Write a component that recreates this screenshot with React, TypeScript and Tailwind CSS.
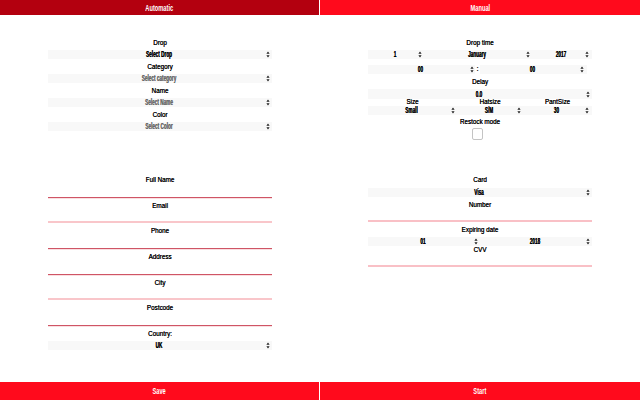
import React from 'react';

const valueFont = "font-['Liberation_Sans',sans-serif] font-bold";

function Arrows() {
  return (
    <svg width="4" height="7" viewBox="0 0 4 7" className="shrink-0">
      <path d="M2 0.5 L3.6 2.8 H0.4 Z M2 6.5 L3.6 4.2 H0.4 Z" fill="#222" />
    </svg>
  );
}

function Select({
  value,
  muted,
  className = 'h-[9px]',
  pad = 'pr-[2px]',
}: {
  value: string;
  muted?: boolean;
  className?: string;
  pad?: string;
}) {
  return (
    <div className={`relative flex items-center justify-end bg-[#f8f8f8] ${pad} ${className}`}>
      <span
        className={`absolute inset-x-0 scale-x-[0.52] pr-[4px] text-center text-[9px] leading-[9px] whitespace-nowrap [text-shadow:0.3px_0_0_currentColor] ${valueFont} ${
          muted ? 'text-[#6a6a6a]' : 'text-black'
        }`}
      >
        {value}
      </span>
      <Arrows />
    </div>
  );
}

function Label({ text, className = 'h-[15px] pt-[1px]' }: { text: string; className?: string }) {
  return (
    <div
      className={`flex items-center justify-center text-[6.3px] leading-none text-black [text-shadow:0.2px_0_0_currentColor] ${className}`}
    >
      {text}
    </div>
  );
}

function Field({ text, line }: { text: string; line: string }) {
  return (
    <div className={`h-[25.7px] pt-[3px] ${line}`}>
      <Label text={text} className="h-[10px]" />
    </div>
  );
}

function Bar({ text, className }: { text: string; className: string }) {
  return (
    <div className={`flex items-center justify-center ${className}`}>
      <span className={`scale-x-[0.6] text-[9.5px] leading-none text-white ${valueFont}`}>{text}</span>
    </div>
  );
}

// the underline falls on a different pixel row per field in the reference
const strongLine = 'border-b border-[#cf5565] shadow-[0_1px_0_#f9dfe1]';
const paleLine = 'border-b-2 border-[#f9c6ca]';

export default function App() {
  return (
    <div className="flex h-[400px] w-[640px] overflow-hidden bg-white font-['Liberation_Sans',sans-serif]">
      {/* left side */}
      <div className="flex w-[320px] flex-col border-r border-white">
        <Bar text="Automatic" className="h-[15px] bg-[#b3000f]" />
        <div className="mt-[20px] px-[48px] pr-[47px]">
          <Label text="Drop" />
          <Select value="Select Drop" />
          <Label text="Category" />
          <Select value="Select category" muted />
          <Label text="Name" />
          <Select value="Select Name" muted />
          <Label text="Color" />
          <Select value="Select Color" muted />
        </div>
        <div className="mt-[41px] px-[48px] pr-[47px]">
          <Field text="Full Name" line={strongLine} />
          <Field text="Email" line={paleLine} />
          <Field text="Phone" line={strongLine} />
          <Field text="Address" line={strongLine} />
          <Field text="City" line={paleLine} />
          <Field text="Postcode" line={strongLine} />
          <Label text="Country:" />
          <Select value="UK" />
        </div>
        <Bar text="Save" className="mt-auto h-[18px] bg-[#ff0a1c]" />
      </div>

      {/* right side */}
      <div className="flex w-[320px] flex-col">
        <Bar text="Manual" className="h-[15px] bg-[#ff0a1c]" />
        <div className="mt-[20px] px-[48px]">
          <Label text="Drop time" />
          <div className="grid grid-cols-[56px_108px_60px]">
            <Select value="1" />
            <Select value="January" />
            <Select value="2017" pad="pr-[3px]" />
          </div>
          <div className="mt-[6px] flex items-center">
            <Select value="00" className="h-[9px] w-[107px]" pad="pr-[1px]" />
            <span className="w-[5px] text-center text-[6.5px] leading-none font-bold">:</span>
            <Select value="00" className="h-[9px] w-[107px]" pad="pr-[3px]" />
          </div>
          <Label text="Delay" />
          <Select value="0.0" className="h-[10px]" />
          <div className="grid grid-cols-[89px_66px_69px]">
            <div>
              <Label text="Size" className="h-[7px]" />
              <Select value="Small" />
            </div>
            <div>
              <Label text="Hatsize" className="h-[7px]" />
              <Select value="S/M" />
            </div>
            <div>
              <Label text="PantSize" className="h-[7px]" />
              <Select value="30" pad="pr-[3px]" />
            </div>
          </div>
          <Label text="Restock mode" className="mt-[1px] h-[13px]" />
          <div className="-mt-[1px] flex justify-center pr-[5px]">
            <div className="h-[12px] w-[11px] rounded-[2px] border border-[#c4c4c4] bg-white" />
          </div>
        </div>
        <div className="mt-[32px] px-[48px]">
          <Label text="Card" className="h-[16px] pt-[1px]" />
          <Select value="Visa" />
          <div className="h-[25px] border-b-2 border-[#f9c0c6] pt-[3px]">
            <Label text="Number" className="h-[10px]" />
          </div>
          <Label text="Expiring date" className="h-[15px] pt-[1px]" />
          <div className="grid grid-cols-2">
            <Select value="01" />
            <Select value="2018" />
          </div>
          <div className="h-[21px] border-b-2 border-[#f9c0c6]">
            <Label text="CVV" className="h-[8px]" />
          </div>
        </div>
        <Bar text="Start" className="mt-auto h-[18px] bg-[#ff0a1c]" />
      </div>
    </div>
  );
}
